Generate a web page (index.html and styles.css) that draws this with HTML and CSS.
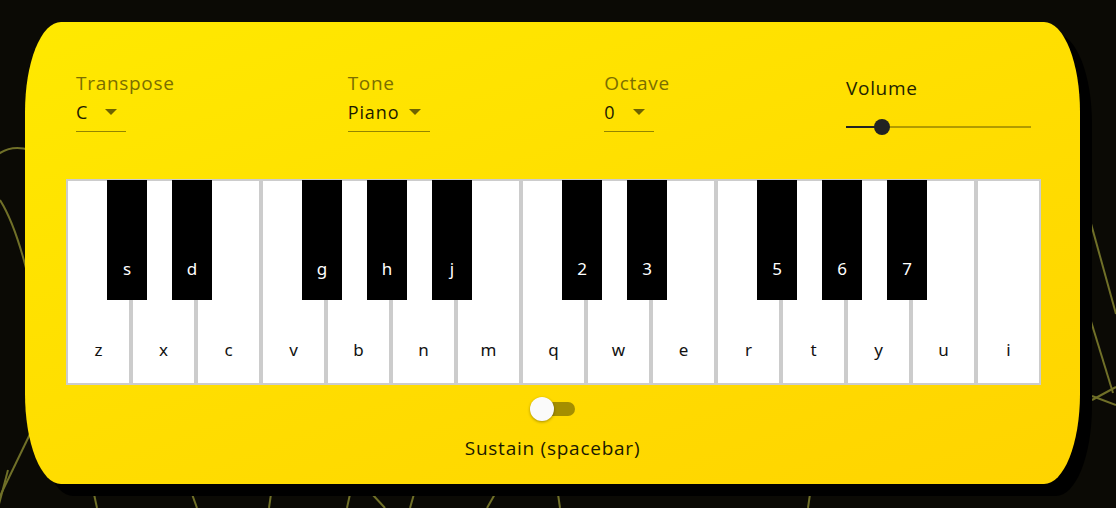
FILE: index.html
```html
<!DOCTYPE html>
<html lang="en">
<head>
<meta charset="utf-8">
<title>Piano</title>
<link rel="stylesheet" href="styles.css">
</head>
<body>
<svg class="bg-lines" width="1116" height="508" viewBox="0 0 1116 508" aria-hidden="true">
  <g fill="none" stroke="#707028" stroke-width="2">
    <path d="M-4 156 Q10 144 30 150"/>
    <path d="M0 200 Q14 222 26 268"/>
    <path d="M0 496 L30 434"/>
    <path d="M-2 508 L8 470"/>
    <path d="M94 494 L97 508"/>
    <path d="M192 494 L197 508"/>
    <path d="M271 494 L269 508"/>
    <path d="M350 494 L347 508"/>
    <path d="M372 494 L385 508"/>
    <path d="M414 494 L410 508"/>
    <path d="M495 494 L487 508"/>
    <path d="M558 494 L560 508"/>
    <path d="M810 494 L808 508"/>
    <path d="M1090 220 L1116 314"/>
    <path d="M1090 318 L1113 393"/>
    <path d="M1092 400 L1116 387"/>
    <path d="M1092 396 L1116 405"/>
  </g>
</svg>
<main class="card">
  <section class="controls">
    <div class="field field-transpose">
      <div class="label">Transpose</div>
      <div class="select select-short"><span class="value">C</span><span class="arrow"></span></div>
    </div>
    <div class="field field-tone">
      <div class="label">Tone</div>
      <div class="select select-tone"><span class="value">Piano</span><span class="arrow"></span></div>
    </div>
    <div class="field field-octave">
      <div class="label">Octave</div>
      <div class="select select-short"><span class="value">0</span><span class="arrow"></span></div>
    </div>
    <div class="field volume">
      <div class="label label-dark">Volume</div>
      <div class="slider">
        <div class="slider-fill"></div>
        <div class="slider-thumb"></div>
      </div>
    </div>
  </section>

  <section class="piano">
    <div class="white-key">z</div>
    <div class="white-key">x</div>
    <div class="white-key">c</div>
    <div class="white-key">v</div>
    <div class="white-key">b</div>
    <div class="white-key">n</div>
    <div class="white-key">m</div>
    <div class="white-key">q</div>
    <div class="white-key">w</div>
    <div class="white-key">e</div>
    <div class="white-key">r</div>
    <div class="white-key">t</div>
    <div class="white-key">y</div>
    <div class="white-key">u</div>
    <div class="white-key">i</div>
    <div class="black-key" style="left:41px">s</div>
    <div class="black-key" style="left:106px">d</div>
    <div class="black-key" style="left:236px">g</div>
    <div class="black-key" style="left:301px">h</div>
    <div class="black-key" style="left:366px">j</div>
    <div class="black-key" style="left:496px">2</div>
    <div class="black-key" style="left:561px">3</div>
    <div class="black-key" style="left:691px">5</div>
    <div class="black-key" style="left:756px">6</div>
    <div class="black-key" style="left:821px">7</div>
  </section>

  <section class="sustain">
    <div class="switch"><span class="switch-track"></span><span class="switch-thumb"></span></div>
    <div class="sustain-label">Sustain (spacebar)</div>
  </section>
</main>
</body>
</html>
```

FILE: styles.css
```css
* { box-sizing: border-box; }

html, body {
  margin: 0;
  padding: 0;
}

body {
  width: 1116px;
  height: 508px;
  background: #0b0a05;
  font-family: "Open Sans", "Lato", sans-serif;
  position: relative;
  overflow: hidden;
  padding-top: 22px;
  padding-left: 25px;
}

.bg-lines {
  position: absolute;
  left: 0;
  top: 0;
  z-index: 0;
}

.card {
  position: relative;
  z-index: 1;
  width: 1055px;
  height: 462px;
  background: linear-gradient(160deg, #ffe900 0%, #ffdd00 55%, #ffd400 100%);
  border-radius: 36px / 90px;
  box-shadow: 12px 12px 0 #000;
  padding: 50px 0 0 0;
}

.controls {
  display: flex;
  justify-content: space-between;
  padding: 0 49px 0 51px;
  height: 107px;
}

.field {
  display: flex;
  flex-direction: column;
}

.field-transpose { width: 97px; }
.field-tone { width: 82px; }
.field-octave { width: 67px; }

.label {
  font-size: 19px;
  line-height: 22px;
  letter-spacing: 0.7px;
  color: #7b6e00;
  white-space: nowrap;
}

.label-dark {
  color: #241f00;
  margin-top: 5px;
}

.select {
  display: flex;
  align-items: center;
  margin-top: 7px;
  height: 31px;
  padding-bottom: 8px;
  border-bottom: 1px solid #938500;
}

.select-short { width: 50px; }
.select-tone { width: 82px; }

.value {
  font-size: 18px;
  line-height: 22px;
  letter-spacing: 0.9px;
  color: #1c1a00;
}

.arrow {
  margin-left: auto;
  margin-right: 9px;
  width: 0;
  height: 0;
  border-left: 6px solid transparent;
  border-right: 6px solid transparent;
  border-top: 6px solid #6e6300;
}

.volume { width: 185px; }

.slider {
  position: relative;
  margin-top: 27px;
  height: 2px;
  width: 185px;
  background: #b29b00;
}

.slider-fill {
  position: absolute;
  left: 0;
  top: 0;
  height: 2px;
  width: 35px;
  background: #222;
}

.slider-thumb {
  position: absolute;
  left: 28px;
  top: -7px;
  width: 16px;
  height: 16px;
  border-radius: 50%;
  background: #222;
}

.piano {
  position: relative;
  display: flex;
  width: 975px;
  height: 206px;
  margin: 0 auto 0 41px;
}

.white-key {
  width: 65px;
  height: 206px;
  background: #fff;
  border: 2px solid #cccccc;
  display: flex;
  align-items: flex-end;
  justify-content: center;
  padding-bottom: 22px;
  font-family: "Noto Sans", "Open Sans", sans-serif;
  font-size: 17px;
  line-height: 22px;
  color: #111;
}

.black-key {
  position: absolute;
  top: 1px;
  width: 40px;
  height: 120px;
  background: #000;
  color: #fff;
  display: flex;
  align-items: flex-end;
  justify-content: center;
  padding-bottom: 20px;
  font-family: "Noto Sans", "Open Sans", sans-serif;
  font-size: 17px;
  font-weight: 400;
  line-height: 22px;
}

.sustain {
  display: flex;
  flex-direction: column;
  align-items: center;
  padding-top: 12px;
}

.switch {
  position: relative;
  width: 46px;
  height: 24px;
}

.switch-track {
  position: absolute;
  left: 11px;
  top: 5px;
  width: 34px;
  height: 14px;
  border-radius: 7px;
  background: #a48e00;
}

.switch-thumb {
  position: absolute;
  left: 0;
  top: 0;
  width: 24px;
  height: 24px;
  border-radius: 50%;
  background: #fafafa;
  box-shadow: 0 1px 3px rgba(0,0,0,0.35);
}

.sustain-label {
  margin-top: 16px;
  font-size: 19px;
  line-height: 22px;
  letter-spacing: 0.75px;
  color: #1c1a00;
}
```
